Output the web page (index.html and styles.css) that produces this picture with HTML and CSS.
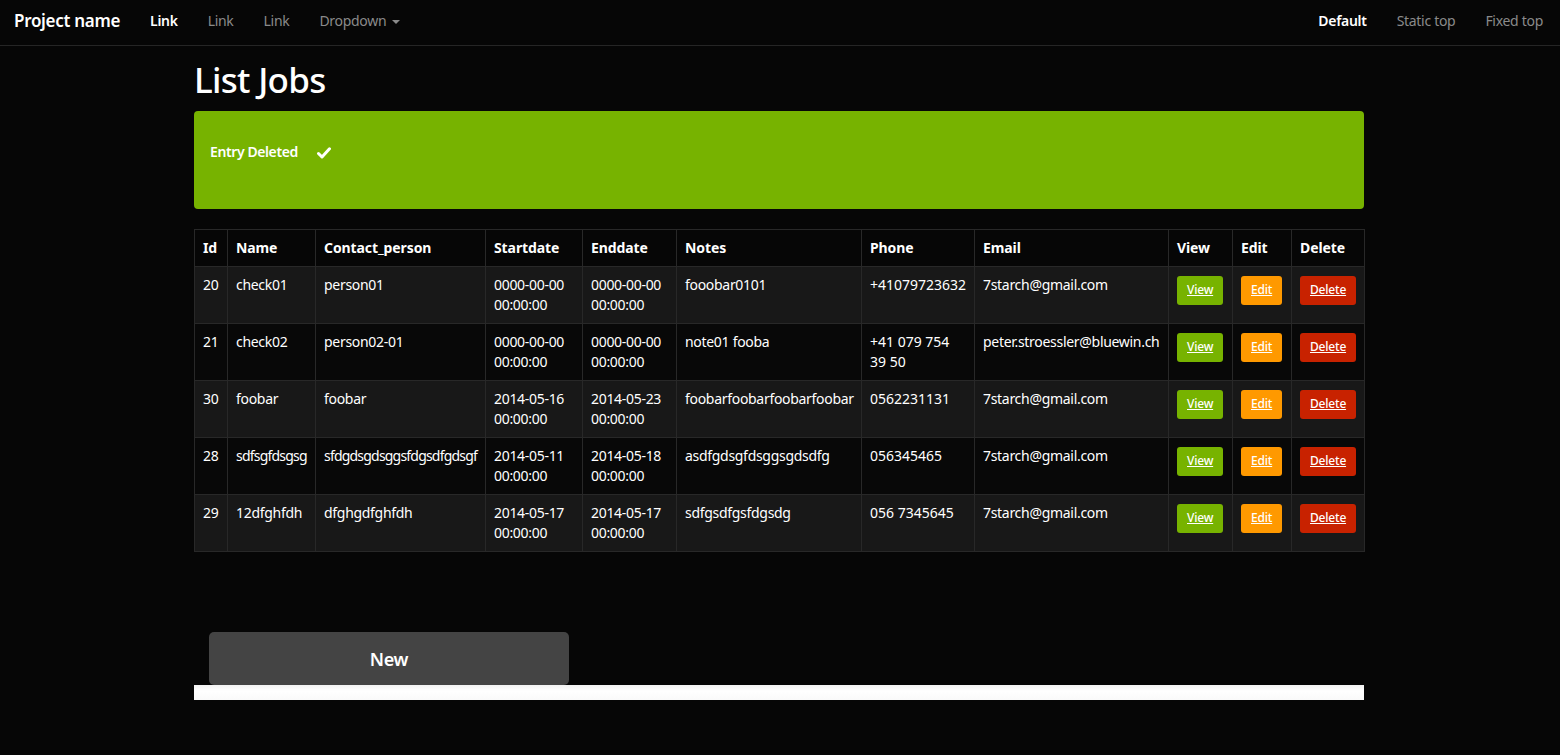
FILE: index.html
```html
<!DOCTYPE html>
<html>
<head>
<meta charset="utf-8">
<link rel="stylesheet" href="styles.css">
</head>
<body>
<nav class="navbar">
  <div class="nav-left">
    <a class="brand">Project name</a>
    <a class="nav-link active">Link</a>
    <a class="nav-link">Link</a>
    <a class="nav-link">Link</a>
    <a class="nav-link">Dropdown <span class="caret"></span></a>
  </div>
  <div class="nav-right">
    <a class="nav-link active">Default</a>
    <a class="nav-link">Static top</a>
    <a class="nav-link">Fixed top</a>
  </div>
</nav>
<main class="container">
  <h1 class="title">List Jobs</h1>
  <div class="alert">
    <span class="alert-text">Entry Deleted</span>
    <svg class="check" width="14" height="12" viewBox="0 0 14 12"><path d="M1.5 6.5 L5 10 L12.5 1.8" fill="none" stroke="#fff" stroke-width="3" stroke-linecap="round" stroke-linejoin="round"/></svg>
  </div>
  <table class="jobs">
    <colgroup>
      <col class="c-id"><col class="c-name"><col class="c-contact"><col class="c-start"><col class="c-end"><col class="c-notes"><col class="c-phone"><col class="c-email"><col class="c-view"><col class="c-edit"><col class="c-del">
    </colgroup>
    <thead>
      <tr><th>Id</th><th>Name</th><th>Contact_person</th><th>Startdate</th><th>Enddate</th><th>Notes</th><th>Phone</th><th>Email</th><th>View</th><th>Edit</th><th>Delete</th></tr>
    </thead>
    <tbody>
      <tr class="odd"><td>20</td><td>check01</td><td>person01</td><td>0000-00-00 00:00:00</td><td>0000-00-00 00:00:00</td><td>fooobar0101</td><td class="phone">+41079723632</td><td>7starch@gmail.com</td><td><a class="btn btn-view">View</a></td><td><a class="btn btn-edit">Edit</a></td><td><a class="btn btn-del">Delete</a></td></tr>
      <tr class="even"><td>21</td><td>check02</td><td>person02-01</td><td>0000-00-00 00:00:00</td><td>0000-00-00 00:00:00</td><td>note01 fooba</td><td class="phone">+41 079 754 39 50</td><td>peter.stroessler@bluewin.ch</td><td><a class="btn btn-view">View</a></td><td><a class="btn btn-edit">Edit</a></td><td><a class="btn btn-del">Delete</a></td></tr>
      <tr class="odd"><td>30</td><td>foobar</td><td>foobar</td><td>2014-05-16 00:00:00</td><td>2014-05-23 00:00:00</td><td>foobarfoobarfoobarfoobar</td><td class="phone">0562231131</td><td>7starch@gmail.com</td><td><a class="btn btn-view">View</a></td><td><a class="btn btn-edit">Edit</a></td><td><a class="btn btn-del">Delete</a></td></tr>
      <tr class="even"><td>28</td><td class="tight">sdfsgfdsgsg</td><td class="tight">sfdgdsgdsggsfdgsdfgdsgf</td><td>2014-05-11 00:00:00</td><td>2014-05-18 00:00:00</td><td>asdfgdsgfdsggsgdsdfg</td><td class="phone">056345465</td><td>7starch@gmail.com</td><td><a class="btn btn-view">View</a></td><td><a class="btn btn-edit">Edit</a></td><td><a class="btn btn-del">Delete</a></td></tr>
      <tr class="odd"><td>29</td><td>12dfghfdh</td><td>dfghgdfghfdh</td><td>2014-05-17 00:00:00</td><td>2014-05-17 00:00:00</td><td>sdfgsdfgsfdgsdg</td><td class="phone">056 7345645</td><td>7starch@gmail.com</td><td><a class="btn btn-view">View</a></td><td><a class="btn btn-edit">Edit</a></td><td><a class="btn btn-del">Delete</a></td></tr>
    </tbody>
  </table>
  <div class="actions">
    <a class="btn-new">New</a>
  </div>
  <div class="footer-bar"></div>
</main>
</body>
</html>
```
FILE: styles.css
```css
* { box-sizing: border-box; }
html, body {
  margin: 0;
  padding: 0;
  background: #060606;
  color: #fff;
  font-family: "Noto Sans", "Open Sans", "DejaVu Sans", sans-serif;
  font-size: 14px;
  line-height: 20px;
}
a { color: inherit; text-decoration: none; }

.navbar {
  height: 46px;
  border-bottom: 1px solid #252525;
  display: flex;
  justify-content: space-between;
  align-items: center;
  padding: 0 2px 4px 0;
}
.nav-left, .nav-right { display: flex; align-items: center; }
.brand {
  font-size: 17px;
  font-weight: 600;
  color: #fff;
  padding: 0 15px 0 14px;
  letter-spacing: -0.3px;
}
.nav-link {
  color: #8a8a8a;
  padding: 0 15px;
  font-size: 14px;
  letter-spacing: -0.3px;
}
.nav-link.active { color: #fff; font-weight: 600; }
.caret {
  display: inline-block;
  width: 0; height: 0;
  border-left: 4px solid transparent;
  border-right: 4px solid transparent;
  border-top: 4px solid #8a8a8a;
  vertical-align: middle;
  margin-left: 2px;
}

.container {
  width: 1170px;
  margin: 0 auto;
  padding-top: 14px;
  position: relative;
  left: -1px;
}
.title {
  font-size: 35px;
  line-height: 40px;
  font-weight: 500;
  margin: 0 0 11px 0;
  letter-spacing: -0.7px;
}
.alert {
  background: #77b300;
  border-radius: 4px;
  height: 98px;
  padding: 31px 15px 0 16px;
  display: flex;
  align-items: flex-start;
  gap: 19px;
  margin-bottom: 20px;
  font-weight: 600;
}
.alert-text { font-size: 14px; letter-spacing: -0.4px; }
.check { margin-top: 5px; }

.jobs {
  width: 1170px;
  table-layout: fixed;
  border-collapse: collapse;
  border: 1px solid #282828;
}
.c-id { width: 33px; }
.c-name { width: 88px; }
.c-contact { width: 170px; }
.c-start { width: 97px; }
.c-end { width: 94px; }
.c-notes { width: 185px; }
.c-phone { width: 113px; }
.c-email { width: 194px; }
.c-view { width: 64px; }
.c-edit { width: 59px; }
.c-del { width: 73px; }

.jobs th, .jobs td {
  border: 1px solid #282828;
  padding: 8px;
  text-align: left;
  vertical-align: top;
  line-height: 20px;
}
.jobs th { font-weight: 700; background: #060606; letter-spacing: -0.1px; }
.jobs td { font-weight: 400; letter-spacing: -0.3px; }
.jobs td.phone { letter-spacing: 0; }
.jobs td.tight { letter-spacing: -0.8px; }
.jobs tr.odd td { background: #181818; }
.jobs tr.even td { background: #080808; }

.btn {
  display: inline-block;
  font-size: 12px;
  line-height: 18px;
  padding: 5px 10px 6px;
  border-radius: 3px;
  text-decoration: underline;
  color: #fff;
  font-weight: 500;
  margin-top: 1px;
  letter-spacing: -0.2px;
}
.btn-view { background: #77b300; }
.btn-edit { background: #ff9900; }
.btn-del { background: #c82200; }

.actions {
  padding: 80px 0 0 15px;
}
.btn-new {
  display: flex;
  align-items: center;
  justify-content: center;
  width: 360px;
  height: 53px;
  background: #444;
  border-radius: 5px;
  font-size: 18px;
  font-weight: 600;
  letter-spacing: -0.3px;
}
.footer-bar {
  height: 15px;
  background: linear-gradient(#f2f2f2, #fff 40%, #fafafa);
}
```
